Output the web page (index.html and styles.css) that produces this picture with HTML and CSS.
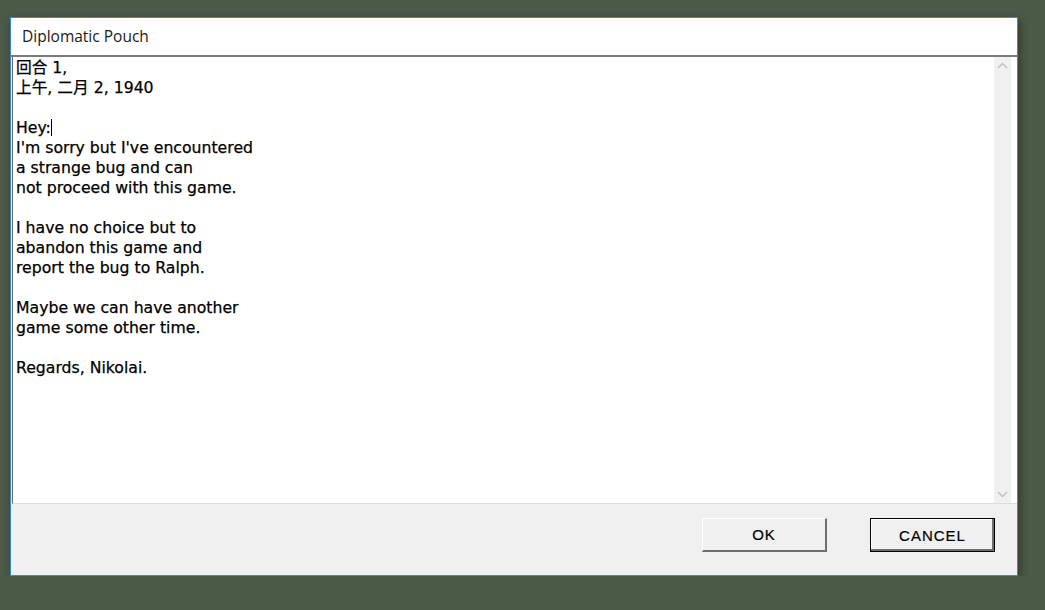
FILE: index.html
```html
<!DOCTYPE html>
<html>
<head>
    <title>Diplomatic Pouch</title>
    <meta name="viewport" content="width=device-width, initial-scale=1.0">
    <link rel="stylesheet" href="styles.css">
</head>
<body>
    <div class="dialog">
        <div class="titlebar">Diplomatic Pouch</div>
        <div class="content">
            <div class="message">
                <p>回合 1,<br>上午, 二月 2, 1940</p>
                <p>Hey:<span class="caret"></span><br>I'm sorry but I've encountered<br>a strange bug and can<br>not proceed with this game.</p>
                <p>I have no choice but to<br>abandon this game and<br>report the bug to Ralph.</p>
                <p>Maybe we can have another<br>game some other time.</p>
                <p>Regards, Nikolai.</p>
            </div>
            <div class="scrollbar">
                <svg width="17" height="17" viewBox="0 0 17 17"><path d="M4 10 L8.5 5.5 L13 10" fill="none" stroke="#c2c2c2" stroke-width="1.5"/></svg>
                <svg width="17" height="17" viewBox="0 0 17 17"><path d="M4 7 L8.5 11.5 L13 7" fill="none" stroke="#c2c2c2" stroke-width="1.5"/></svg>
            </div>
        </div>
        <div class="footer">
            <button class="btn">OK</button>
            <button class="btn default">CANCEL</button>
        </div>
    </div>
</body>
</html>
```

FILE: styles.css
```css
body {
    margin: 0;
    padding: 17px 0 0 10px;
    background-color: #4b5947;
    font-family: "DejaVu Sans", sans-serif;
}
.dialog {
    width: 1006px;
    height: 557px;
    border: 1px solid #3a8ad0;
    background: #f0f0f0;
    display: flex;
    flex-direction: column;
    box-shadow: 2px 3px 8px rgba(0, 0, 0, 0.35);
}
.titlebar {
    height: 37px;
    line-height: 37px;
    background: white;
    padding-left: 11px;
    font-family: "Open Sans", "Noto Sans", sans-serif;
    font-size: 15.5px;
    color: #1a1a1a;
    border-bottom: 2px solid #7a7a7a;
}
.content {
    height: 446px;
    display: flex;
    background: white;
    margin-left: 1px;
    border-left: 1px solid #6a6a6a;
    border-bottom: 1px solid #dcdcdc;
}
.message {
    flex: 1;
    padding: 1px 0 0 3px;
    font-size: 15.7px;
    line-height: 20px;
    color: #000;
    font-family: "DejaVu Sans", "Noto Sans CJK SC", sans-serif;
    -webkit-text-stroke: 0.25px #000;
}
.message p {
    margin: 0 0 20px 0;
}
.caret {
    display: inline-block;
    width: 1px;
    height: 17px;
    background: #000;
    vertical-align: -3px;
}
.scrollbar {
    width: 17px;
    margin-right: 6px;
    background: #f0f0f0;
    display: flex;
    flex-direction: column;
    justify-content: space-between;
    padding: 1px 0;
}
.footer {
    flex: 1;
    display: flex;
    justify-content: flex-end;
    align-items: flex-start;
    gap: 43px;
    padding: 14px 22px 0 0;
}
.btn {
    width: 125px;
    height: 34px;
    background: #f0f0f0;
    border-top: 1px solid #ffffff;
    border-left: 1px solid #ffffff;
    border-right: 2px solid #6e6e6e;
    border-bottom: 2px solid #6e6e6e;
    font-family: "Liberation Sans", Arial, sans-serif;
    font-size: 15px;
    letter-spacing: 1px;
    color: #000;
    padding: 0;
    -webkit-text-stroke: 0.2px #000;
}
.default {
    border: 1px solid #000;
    box-shadow: inset -2px -2px 0 #6e6e6e, inset 1px 1px 0 #ffffff;
}
```
